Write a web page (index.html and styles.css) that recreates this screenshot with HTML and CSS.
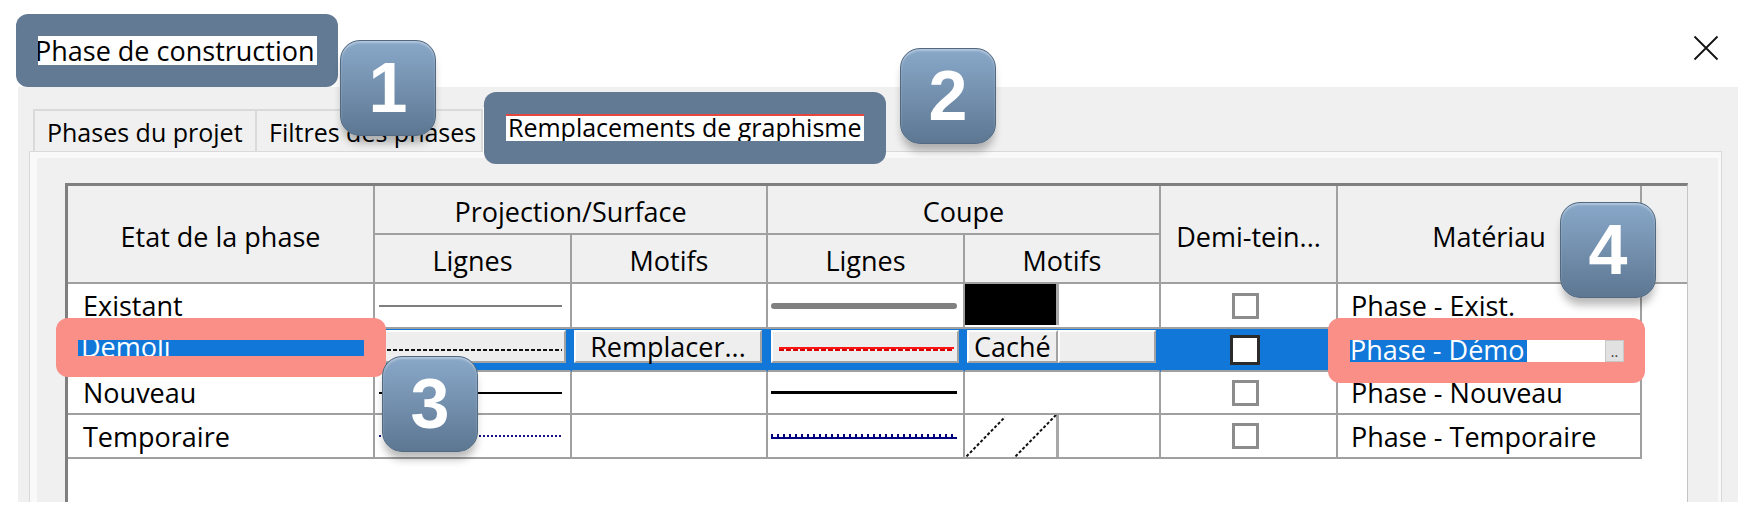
FILE: index.html
```html
<!DOCTYPE html>
<html lang="fr">
<head>
<meta charset="utf-8">
<title>Phase de construction</title>
<link rel="stylesheet" href="styles.css">
</head>
<body>
<div class="dialog">
  <header class="titlebar">
    <div class="callout callout-title"><span class="title-text">Phase de construction</span></div>
    <button class="close" aria-label="Fermer"><svg width="26" height="26" viewBox="0 0 26 26"><path d="M1.5 1.5L24.5 24.5M24.5 1.5L1.5 24.5" stroke="#111" stroke-width="1.8" fill="none"/></svg></button>
  </header>
  <section class="panel">
    <nav class="tabs">
      <div class="tab tab-1">Phases du projet</div>
      <div class="tab tab-2">Filtres des phases</div>
      <div class="tab tab-active">
        <div class="callout callout-tab"><span class="tab-label">Remplacements de graphisme</span></div>
      </div>
    </nav>
    <div class="tabpage">
      <div class="grid">
        <div class="hcell h-etat">Etat de la phase</div>
        <div class="hcell h-proj">Projection/Surface</div>
        <div class="hcell h-coupe">Coupe</div>
        <div class="hcell h-demi">Demi-tein...</div>
        <div class="hcell h-mat">Matériau</div>
        <div class="hcell h-fill"></div>
        <div class="hcell h-sub1">Lignes</div>
        <div class="hcell h-sub2">Motifs</div>
        <div class="hcell h-sub3">Lignes</div>
        <div class="hcell h-sub4">Motifs</div>

        <div class="cell c-label">Existant</div>
        <div class="cell c-proj"><span class="ln ln-thin-grey"></span></div>
        <div class="cell"></div>
        <div class="cell c-coupe"><span class="ln ln-thick-grey"></span></div>
        <div class="cell c-motif"><span class="swatch swatch-black"></span></div>
        <div class="cell c-demi"><span class="cb"></span></div>
        <div class="cell c-mat">Phase - Exist.</div>
        <div class="cell c-fill"></div>

        <div class="cell sel c-label">Démoli</div>
        <div class="cell sel"><span class="btn btn-line"><span class="ln ln-dash"></span></span></div>
        <div class="cell sel"><span class="btn">Remplacer...</span></div>
        <div class="cell sel sel-coupe"><span class="btn btn-line btn-line-red"><span class="ln ln-red"></span></span></div>
        <div class="cell sel"><span class="btn btn-cache">Caché</span><span class="btn btn-empty"></span></div>
        <div class="cell sel c-demi"><span class="cb cb-sel"></span></div>
        <div class="cell sel c-mat">Phase - Démo</div>
        <div class="cell c-fill"></div>

        <div class="cell c-label">Nouveau</div>
        <div class="cell c-proj"><span class="ln ln-black"></span></div>
        <div class="cell"></div>
        <div class="cell c-coupe"><span class="ln ln-black ln-black-thick"></span></div>
        <div class="cell"></div>
        <div class="cell c-demi"><span class="cb"></span></div>
        <div class="cell c-mat">Phase - Nouveau</div>
        <div class="cell c-fill"></div>

        <div class="cell c-label">Temporaire</div>
        <div class="cell c-proj"><span class="ln ln-dot-navy"></span></div>
        <div class="cell"></div>
        <div class="cell c-coupe"><span class="ln ln-tick-navy"></span></div>
        <div class="cell c-motif"><span class="swatch swatch-hatch"><svg width="91" height="42" viewBox="0 0 91 42"><path d="M-2 45L40 2M47 45L91 0" stroke="#111" stroke-width="2" stroke-dasharray="3 2" fill="none"/></svg></span></div>
        <div class="cell c-demi"><span class="cb"></span></div>
        <div class="cell c-mat">Phase - Temporaire</div>
        <div class="cell c-fill"></div>

        <div class="callout-hl callout-demoli"><span class="strip-demoli">Démoli</span></div>
        <div class="callout-hl callout-mat"><span class="strip-mat"><span class="sel-text">Phase - Démo</span><span class="dots">..</span></span></div>
      </div>
    </div>
  </section>
  <span class="badge badge-1">1</span>
  <span class="badge badge-2">2</span>
  <span class="badge badge-3">3</span>
  <span class="badge badge-4">4</span>
</div>
</body>
</html>
```
FILE: styles.css
```css
* { box-sizing: border-box; }
html, body { margin: 0; padding: 0; background: #fff; }
body {
  font-family: "Open Sans", "Noto Sans", sans-serif;
  font-size: 27px;
  color: #000;
  width: 1746px;
  height: 518px;
  overflow: hidden;
}
.dialog { position: relative; width: 1746px; height: 502px; }

/* title bar */
.titlebar {
  height: 87px;
  display: flex;
  justify-content: space-between;
  align-items: flex-start;
}
.callout { background: #627a94; border-radius: 12px; }
.callout-title {
  margin: 14px 0 0 16px;
  width: 322px;
  height: 73px;
  padding: 22px 0 0 22px;
}
.title-text {
  display: block;
  width: 279px;
  height: 29px;
  background: #fff;
  line-height: 29px;
  overflow: hidden;
  white-space: nowrap;
  text-indent: -3px;
}
.close {
  margin: 35px 27px 0 0;
  width: 26px;
  height: 26px;
  padding: 0;
  border: 0;
  background: none;
}
.close svg { display: block; }

/* panel + tabs */
.panel {
  margin-left: 18px;
  width: 1720px;
  height: 415px;
  background: #f0f0f0;
  overflow: hidden;
  padding-top: 22px;
}
.tabs {
  display: flex;
  align-items: flex-end;
  height: 43px;
  margin-left: 15px;
}
.tab {
  height: 43px;
  border: 2px solid #dadada;
  border-bottom: 0;
  padding: 2px 0 0 12px;
  line-height: 39px;
  font-size: 25px;
  white-space: nowrap;
  background: #f0f0f0;
}
.tab-1 { width: 224px; }
.tab-2 { width: 226px; border-left: 0; }
.tab-active {
  position: relative;
  width: 401px;
  height: 47px;
  background: #fff;
  border-left: 0;
}
.callout-tab {
  position: absolute;
  left: 1px;
  top: -15px;
  width: 402px;
  height: 72px;
  padding: 22px 0 0 22px;
}
.tab-label {
  display: block;
  width: 358px;
  height: 27px;
  background: #fff;
  border-top: 2px solid #e5473c;
  line-height: 22px;
  font-size: 25px;
  white-space: nowrap;
  overflow: hidden;
  padding-left: 2px;
}

.tabpage {
  margin-left: 12px;
  width: 1691px;
  height: 400px;
  outline: 1px solid #d9d9d9;
  border-style: solid;
  border-color: #f9f9f9;
  border-width: 6px 3px 0 7px;
  padding: 25px 0 0 28px;
}

/* grid */
.grid {
  position: relative;
  width: 1623px;
  height: 330px;
  background: #fff;
  border-top: 3px solid #7f7f7f;
  border-left: 3px solid #7f7f7f;
  border-right: 1px solid #c4c4c4;
  display: grid;
  grid-template-columns: 307px 197px 196px 197px 196px 177px 304px 45px;
  grid-template-rows: 49px 49px 45px 43px 43px 44px;
  align-content: start;
}
.hcell {
  background: #f0f0f0;
  border-right: 2px solid #a0a0a0;
  border-bottom: 2px solid #a0a0a0;
  display: flex;
  align-items: center;
  justify-content: center;
  padding-top: 4px;
  white-space: nowrap;
}
.h-etat { grid-column: 1; grid-row: 1 / 3; }
.h-proj { grid-column: 2 / 4; grid-row: 1; }
.h-coupe { grid-column: 4 / 6; grid-row: 1; }
.h-demi { grid-column: 6; grid-row: 1 / 3; }
.h-mat { grid-column: 7; grid-row: 1 / 3; }
.h-fill { grid-column: 8; grid-row: 1 / 3; border-right: 0; }
.h-sub1 { grid-column: 2; grid-row: 2; }
.h-sub2 { grid-column: 3; grid-row: 2; }
.h-sub3 { grid-column: 4; grid-row: 2; }
.h-sub4 { grid-column: 5; grid-row: 2; }

.cell {
  background: #fff;
  border-right: 2px solid #a0a0a0;
  border-bottom: 2px solid #a0a0a0;
  display: flex;
  align-items: center;
  min-width: 0;
  white-space: nowrap;
  overflow: hidden;
}
.c-label { padding-left: 15px; }
.c-mat { padding-left: 13px; }
.c-demi { justify-content: center; padding-right: 7px; }
.c-fill { border: 0; background: #fff; }

.ln { display: block; flex: 1; }
.c-proj .ln { margin: 0 8px 0 4px; }
.c-coupe .ln { margin: 0 6px 0 3px; }
.ln-thin-grey { height: 2px; background: #7f7f7f; }
.ln-thick-grey { height: 6px; background: #808080; border-radius: 3px; }
.ln-black { height: 2px; background: #000; }
.ln-black-thick { height: 3px; }
.ln-dot-navy {
  height: 2px;
  background: repeating-linear-gradient(90deg, #16167e 0 2px, transparent 2px 4px);
}
.ln-tick-navy {
  height: 5px;
  background:
    linear-gradient(#000080, #000080) left bottom / 100% 2px no-repeat,
    repeating-linear-gradient(90deg, #000080 0 2px, transparent 2px 6px);
}

.c-motif { align-items: stretch; }
.swatch {
  display: block;
  width: 94px;
  border-right: 3px solid #a8a8a8;
}
.swatch-black { background: #000; margin-bottom: 2px; }
.swatch-hatch svg { display: block; overflow: visible; }

.cb {
  display: block;
  width: 27px;
  height: 26px;
  border: 3px solid #8c8c8c;
  background: #fff;
}
.cb-sel { width: 30px; height: 30px; border-color: #2b2b2b; }

/* selected row */
.sel {
  background: #1177d8;
  border-right-color: #1177d8;
  align-items: flex-start;
  padding: 1px 4px 0 2px;
}
.sel.sel-coupe { padding-left: 3px; }
.sel.c-demi { align-items: center; padding: 0 7px 0 0; }
.sel.c-label, .sel.c-mat { color: #fff; align-items: center; }
.btn {
  display: flex;
  align-items: center;
  justify-content: center;
  height: 33px;
  flex: 1;
  background: #eeeeee;
  border: 2px solid;
  border-color: #fdfdfd #a2a2a2 #a2a2a2 #fdfdfd;
  white-space: nowrap;
}
.btn-line { padding: 6px 2px 0 8px; }
.btn-line-red { padding: 4px 3px 0 6px; }
.ln-dash {
  height: 2px;
  background: repeating-linear-gradient(90deg, #111 0 4px, transparent 4px 6px);
}
.ln-red {
  height: 4px;
  background:
    linear-gradient(#ff1414, #ff1414) left top / 100% 2px no-repeat,
    repeating-linear-gradient(90deg, #d40000 0 5px, transparent 5px 7px);
}
.btn-cache { flex: 0 0 91px; justify-content: flex-start; padding-left: 5px; }
.btn-empty { flex: 0 0 98px; }

/* annotation overlays */
.callout-hl {
  position: absolute;
  background: #f98f87;
  border-radius: 12px;
  padding: 22px 0 0 22px;
}
.callout-demoli { left: -12px; top: 132px; width: 330px; height: 59px; }
.strip-demoli {
  display: block;
  width: 286px;
  height: 16px;
  background: #1177d8;
  color: #fff;
  line-height: 14px;
  overflow: hidden;
  padding-left: 3px;
  white-space: nowrap;
}
.callout-mat { left: 1260px; top: 132px; width: 317px; height: 65px; }
.strip-mat {
  display: flex;
  width: 274px;
  height: 22px;
  background: #fff;
}
.sel-text {
  display: block;
  width: 177px;
  height: 22px;
  background: #1177d8;
  color: #fff;
  line-height: 19px;
  overflow: hidden;
  white-space: nowrap;
}
.dots {
  margin-left: auto;
  width: 19px;
  height: 22px;
  background: #e1e1e1;
  border: 1px solid #c8c8c8;
  font-size: 14px;
  line-height: 22px;
  text-align: center;
  color: #333;
}

.badge {
  position: absolute;
  width: 96px;
  height: 96px;
  border-radius: 20px;
  background: linear-gradient(#89a8c9, #5d7792);
  border: 1px solid #52697f;
  box-shadow: 0 9px 8px -2px rgba(0, 0, 0, 0.28), inset 0 2px 2px rgba(255, 255, 255, 0.35);
  color: #fff;
  font: bold 70px/94px "Liberation Sans", Arial, sans-serif;
  text-align: center;
}
.badge-1 { left: 340px; top: 40px; }
.badge-2 { left: 900px; top: 48px; }
.badge-3 { left: 382px; top: 356px; }
.badge-4 { left: 1560px; top: 202px; }
```
